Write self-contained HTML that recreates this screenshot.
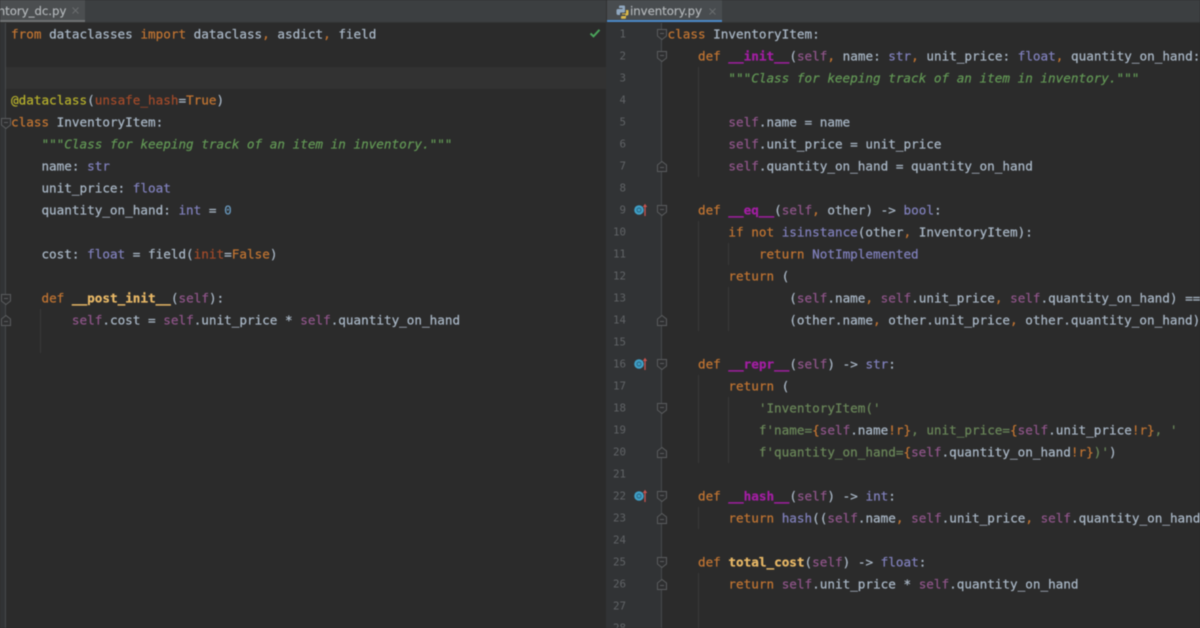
<!DOCTYPE html>
<html><head><meta charset="utf-8">
<style>
html,body{margin:0;padding:0;background:#2b2b2b;}
#p{position:relative;width:1200px;height:628px;overflow:hidden;background:#2b2b2b;filter:blur(.55px);font-family:"DejaVu Sans Mono","Liberation Mono",monospace;}
.r{position:absolute;}
.l{position:absolute;white-space:pre;font-size:12.65px;line-height:22px;height:22px;color:#a9b7c6;transform:translateY(.5px);-webkit-text-stroke:.22px currentColor;}
.h{position:absolute;white-space:pre;font-family:"DejaVu Sans",sans-serif;font-size:11.7px;line-height:22px;color:#b4b8bb;-webkit-text-stroke:.15px currentColor;}
.n{position:absolute;left:606px;width:20px;text-align:right;font-size:10.8px;line-height:22px;color:#606366;transform:translateY(.5px);}
.k{color:#c27532}.s{color:#8f5589}.t{color:#8080bc}.g{color:#6a8759}
.d{color:#629755;font-style:italic}.a{color:#b5af2c}.o{color:#a34b2a}
.u{color:#a31ea3;font-weight:bold}.f{color:#e8b866;font-weight:bold}.b{color:#6897bb}
.i{position:absolute;width:1px;background:#383838;}
svg{position:absolute;overflow:visible}
</style></head><body>
<div id="p">
<div class="r" style="left:0;top:0;width:1200px;height:23px;background:#3c3f41"></div>
<div class="r" style="left:0;top:0;width:85px;height:23px;background:#4b4e50"></div>
<div class="r" style="left:0;top:20px;width:85px;height:3px;background:#6f7274"></div>
<div class="r" style="left:607px;top:0;width:115px;height:23px;background:#484c4f"></div>
<div class="r" style="left:607px;top:20px;width:115px;height:3px;background:#4a88c7"></div>
<div class="r" style="left:606px;top:0;width:1px;height:23px;background:#323232"></div>
<div class="r" style="left:0;top:22px;width:1200px;height:1px;background:#323232"></div>
<div class="h" style="left:-27px;top:0">inventory_dc.py</div>
<svg style="left:72px;top:7px" width="7" height="7"><path d="M.5 .5L6.500 6.500M6.500 .5L.5 6.500" stroke="#6a6d6f" stroke-width="1"/></svg>
<div class="h" style="left:630px;top:0">inventory.py</div>
<svg style="left:709px;top:8px" width="7" height="7"><path d="M.5 .5L6.500 6.500M6.500 .5L.5 6.500" stroke="#6a6d6f" stroke-width="1"/></svg>
<svg style="left:616px;top:5px" width="13" height="14" viewBox="0 0 13 14"><path d="M3 1.500Q3 .5 4 .5H8Q9 .5 9 1.500V6.500Q9 7.500 8 7.500H5Q4 7.500 4 8.500V10H2Q.5 10 .5 8V5.500Q.5 4 2 4H6.500V3H3z" fill="#8fa7bf"/><path d="M12 5H10V8.500H6V9.500H9.500V11H6Q5 11 5 12V13Q5 13.800 6 13.800H8.500Q10 13.800 10 12.500V10.500H11Q12.500 10.500 12.500 9V6Q12.500 5 12 5z" fill="#d9b84a"/></svg>

<div class="r" style="left:0;top:23px;width:6px;height:605px;background:#313335"></div>
<div class="r" style="left:5px;top:23px;width:1px;height:605px;background:#47494b"></div>
<div class="r" style="left:6px;top:67px;width:600px;height:22px;background:#323232"></div>
<div class="r" style="left:606px;top:23px;width:56px;height:605px;background:#313335"></div>
<div class="r" style="left:661px;top:23px;width:1px;height:605px;background:#47494b"></div>

<svg style="left:589px;top:28px" width="12" height="10" viewBox="0 0 12 10"><path d="M1.500 5.500L4.500 8.300L10.500 1.800" fill="none" stroke="#4aa35a" stroke-width="2"/></svg>

<div class="i" style="left:40px;top:309px;height:44px"></div>
<div class="i" style="left:698px;top:67px;height:110px"></div>
<div class="i" style="left:698px;top:221px;height:110px"></div>
<div class="i" style="left:728px;top:243px;height:22px"></div>
<div class="i" style="left:728px;top:287px;height:44px"></div>
<div class="i" style="left:698px;top:375px;height:88px"></div>
<div class="i" style="left:728px;top:397px;height:66px"></div>
<div class="i" style="left:698px;top:507px;height:22px"></div>
<div class="i" style="left:698px;top:573px;height:55px"></div>

<svg style="left:1px;top:118px" width="10" height="11"><path d="M.5 .5H9.500V7L5 10.500L.5 7Z" fill="#2e2f30" stroke="#5a5c5e"/><path d="M3 4.500H7" stroke="#5a5c5e"/></svg>
<svg style="left:1px;top:294px" width="10" height="11"><path d="M.5 .5H9.500V7L5 10.500L.5 7Z" fill="#2e2f30" stroke="#5a5c5e"/><path d="M3 4.500H7" stroke="#5a5c5e"/></svg>
<svg style="left:1px;top:315px" width="10" height="11"><path d="M.5 10.500H9.500V4L5 .5L.5 4Z" fill="#2e2f30" stroke="#5a5c5e"/><path d="M3 6.500H7" stroke="#5a5c5e"/></svg>

<svg style="left:657px;top:29px" width="10" height="11"><path d="M.5 .5H9.500V7L5 10.500L.5 7Z" fill="#2e2f30" stroke="#5a5c5e"/><path d="M3 4.500H7" stroke="#5a5c5e"/></svg>
<svg style="left:657px;top:51px" width="10" height="11"><path d="M.5 .5H9.500V7L5 10.500L.5 7Z" fill="#2e2f30" stroke="#5a5c5e"/><path d="M3 4.500H7" stroke="#5a5c5e"/></svg>
<svg style="left:657px;top:161px" width="10" height="11"><path d="M.5 10.500H9.500V4L5 .5L.5 4Z" fill="#2e2f30" stroke="#5a5c5e"/><path d="M3 6.500H7" stroke="#5a5c5e"/></svg>
<svg style="left:657px;top:205px" width="10" height="11"><path d="M.5 .5H9.500V7L5 10.500L.5 7Z" fill="#2e2f30" stroke="#5a5c5e"/><path d="M3 4.500H7" stroke="#5a5c5e"/></svg>
<svg style="left:657px;top:315px" width="10" height="11"><path d="M.5 10.500H9.500V4L5 .5L.5 4Z" fill="#2e2f30" stroke="#5a5c5e"/><path d="M3 6.500H7" stroke="#5a5c5e"/></svg>
<svg style="left:657px;top:359px" width="10" height="11"><path d="M.5 .5H9.500V7L5 10.500L.5 7Z" fill="#2e2f30" stroke="#5a5c5e"/><path d="M3 4.500H7" stroke="#5a5c5e"/></svg>
<svg style="left:657px;top:403px" width="10" height="11"><path d="M.5 .5H9.500V7L5 10.500L.5 7Z" fill="#2e2f30" stroke="#5a5c5e"/><path d="M3 4.500H7" stroke="#5a5c5e"/></svg>
<svg style="left:657px;top:447px" width="10" height="11"><path d="M.5 10.500H9.500V4L5 .5L.5 4Z" fill="#2e2f30" stroke="#5a5c5e"/><path d="M3 6.500H7" stroke="#5a5c5e"/></svg>
<svg style="left:657px;top:491px" width="10" height="11"><path d="M.5 .5H9.500V7L5 10.500L.5 7Z" fill="#2e2f30" stroke="#5a5c5e"/><path d="M3 4.500H7" stroke="#5a5c5e"/></svg>
<svg style="left:657px;top:513px" width="10" height="11"><path d="M.5 10.500H9.500V4L5 .5L.5 4Z" fill="#2e2f30" stroke="#5a5c5e"/><path d="M3 6.500H7" stroke="#5a5c5e"/></svg>
<svg style="left:657px;top:557px" width="10" height="11"><path d="M.5 .5H9.500V7L5 10.500L.5 7Z" fill="#2e2f30" stroke="#5a5c5e"/><path d="M3 4.500H7" stroke="#5a5c5e"/></svg>
<svg style="left:657px;top:579px" width="10" height="11"><path d="M.5 10.500H9.500V4L5 .5L.5 4Z" fill="#2e2f30" stroke="#5a5c5e"/><path d="M3 6.500H7" stroke="#5a5c5e"/></svg>

<svg style="left:634px;top:203px" width="14" height="14"><circle cx="5" cy="7" r="4.800" fill="#3f9fc6"/><circle cx="5" cy="7" r="2" fill="none" stroke="#2c6f8e" stroke-width="1.200"/><path d="M11 13V2" stroke="#c75450" stroke-width="1.300"/><path d="M8.800 4L11 .8L13.200 4Z" fill="#c75450"/></svg>
<svg style="left:634px;top:357px" width="14" height="14"><circle cx="5" cy="7" r="4.800" fill="#3f9fc6"/><circle cx="5" cy="7" r="2" fill="none" stroke="#2c6f8e" stroke-width="1.200"/><path d="M11 13V2" stroke="#c75450" stroke-width="1.300"/><path d="M8.800 4L11 .8L13.200 4Z" fill="#c75450"/></svg>
<svg style="left:634px;top:489px" width="14" height="14"><circle cx="5" cy="7" r="4.800" fill="#3f9fc6"/><circle cx="5" cy="7" r="2" fill="none" stroke="#2c6f8e" stroke-width="1.200"/><path d="M11 13V2" stroke="#c75450" stroke-width="1.300"/><path d="M8.800 4L11 .8L13.200 4Z" fill="#c75450"/></svg>

<div class="n" style="top:23px">1</div><div class="n" style="top:45px">2</div><div class="n" style="top:67px">3</div><div class="n" style="top:89px">4</div><div class="n" style="top:111px">5</div><div class="n" style="top:133px">6</div><div class="n" style="top:155px">7</div><div class="n" style="top:177px">8</div><div class="n" style="top:199px">9</div><div class="n" style="top:221px">10</div><div class="n" style="top:243px">11</div><div class="n" style="top:265px">12</div><div class="n" style="top:287px">13</div><div class="n" style="top:309px">14</div><div class="n" style="top:331px">15</div><div class="n" style="top:353px">16</div><div class="n" style="top:375px">17</div><div class="n" style="top:397px">18</div><div class="n" style="top:419px">19</div><div class="n" style="top:441px">20</div><div class="n" style="top:463px">21</div><div class="n" style="top:485px">22</div><div class="n" style="top:507px">23</div><div class="n" style="top:529px">24</div><div class="n" style="top:551px">25</div><div class="n" style="top:573px">26</div><div class="n" style="top:595px">27</div><div class="n" style="top:617px">28</div>

<div class="l" style="left:11px;top:23px"><span class="k">from</span> dataclasses <span class="k">import</span> dataclass<span class="k">,</span> asdict<span class="k">,</span> field</div>
<div class="l" style="left:11px;top:89px"><span class="a">@dataclass</span>(<span class="o">unsafe_hash</span>=<span class="k">True</span>)</div>
<div class="l" style="left:11px;top:111px"><span class="k">class</span> InventoryItem:</div>
<div class="l" style="left:11px;top:133px">    <span class="d">"""Class for keeping track of an item in inventory."""</span></div>
<div class="l" style="left:11px;top:155px">    name: <span class="t">str</span></div>
<div class="l" style="left:11px;top:177px">    unit_price: <span class="t">float</span></div>
<div class="l" style="left:11px;top:199px">    quantity_on_hand: <span class="t">int</span> = <span class="b">0</span></div>
<div class="l" style="left:11px;top:243px">    cost: <span class="t">float</span> = field(<span class="o">init</span>=<span class="k">False</span>)</div>
<div class="l" style="left:11px;top:287px">    <span class="k">def</span> <span class="f">__post_init__</span>(<span class="s">self</span>):</div>
<div class="l" style="left:11px;top:309px">        <span class="s">self</span>.cost = <span class="s">self</span>.unit_price * <span class="s">self</span>.quantity_on_hand</div>

<div class="l" style="left:667.500px;top:23px"><span class="k">class</span> InventoryItem:</div>
<div class="l" style="left:667.500px;top:45px">    <span class="k">def</span> <span class="u">__init__</span>(<span class="s">self</span><span class="k">,</span> name: <span class="t">str</span><span class="k">,</span> unit_price: <span class="t">float</span><span class="k">,</span> quantity_on_hand: <span class="t">int</span></div>
<div class="l" style="left:667.500px;top:67px">        <span class="d">"""Class for keeping track of an item in inventory."""</span></div>
<div class="l" style="left:667.500px;top:111px">        <span class="s">self</span>.name = name</div>
<div class="l" style="left:667.500px;top:133px">        <span class="s">self</span>.unit_price = unit_price</div>
<div class="l" style="left:667.500px;top:155px">        <span class="s">self</span>.quantity_on_hand = quantity_on_hand</div>
<div class="l" style="left:667.500px;top:199px">    <span class="k">def</span> <span class="u">__eq__</span>(<span class="s">self</span><span class="k">,</span> other) -&gt; <span class="t">bool</span>:</div>
<div class="l" style="left:667.500px;top:221px">        <span class="k">if not</span> <span class="t">isinstance</span>(other<span class="k">,</span> InventoryItem):</div>
<div class="l" style="left:667.500px;top:243px">            <span class="k">return</span> <span class="t">NotImplemented</span></div>
<div class="l" style="left:667.500px;top:265px">        <span class="k">return</span> (</div>
<div class="l" style="left:667.500px;top:287px">                (<span class="s">self</span>.name<span class="k">,</span> <span class="s">self</span>.unit_price<span class="k">,</span> <span class="s">self</span>.quantity_on_hand) ==</div>
<div class="l" style="left:667.500px;top:309px">                (other.name<span class="k">,</span> other.unit_price<span class="k">,</span> other.quantity_on_hand)</div>
<div class="l" style="left:667.500px;top:353px">    <span class="k">def</span> <span class="u">__repr__</span>(<span class="s">self</span>) -&gt; <span class="t">str</span>:</div>
<div class="l" style="left:667.500px;top:375px">        <span class="k">return</span> (</div>
<div class="l" style="left:667.500px;top:397px">            <span class="g">'InventoryItem('</span></div>
<div class="l" style="left:667.500px;top:419px">            <span class="g">f'name=</span><span class="k">{</span><span class="s">self</span>.name<span class="k">!r}</span><span class="g">, unit_price=</span><span class="k">{</span><span class="s">self</span>.unit_price<span class="k">!r}</span><span class="g">, '</span></div>
<div class="l" style="left:667.500px;top:441px">            <span class="g">f'quantity_on_hand=</span><span class="k">{</span><span class="s">self</span>.quantity_on_hand<span class="k">!r}</span><span class="g">)'</span>)</div>
<div class="l" style="left:667.500px;top:485px">    <span class="k">def</span> <span class="u">__hash__</span>(<span class="s">self</span>) -&gt; <span class="t">int</span>:</div>
<div class="l" style="left:667.500px;top:507px">        <span class="k">return</span> <span class="t">hash</span>((<span class="s">self</span>.name<span class="k">,</span> <span class="s">self</span>.unit_price<span class="k">,</span> <span class="s">self</span>.quantity_on_hand</div>
<div class="l" style="left:667.500px;top:551px">    <span class="k">def</span> <span class="f">total_cost</span>(<span class="s">self</span>) -&gt; <span class="t">float</span>:</div>
<div class="l" style="left:667.500px;top:573px">        <span class="k">return</span> <span class="s">self</span>.unit_price * <span class="s">self</span>.quantity_on_hand</div>
</div>
</body></html>
